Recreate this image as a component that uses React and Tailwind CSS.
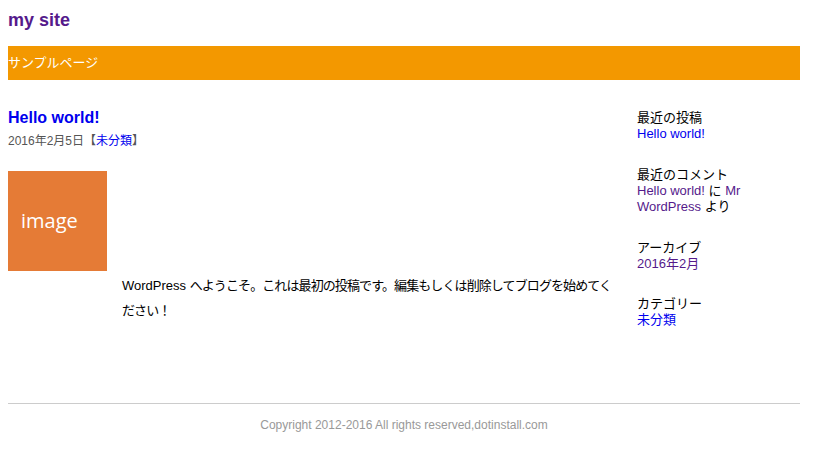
import React from "react";

const SideBlock = ({ title, children }) => (
  <div className="mb-6">
    <h3 className="text-[13px] leading-4 text-black">{title}</h3>
    <div className="text-[13px] leading-[16.5px]">{children}</div>
  </div>
);

const App = () => {
  return (
    <div className="min-h-[450px] bg-white p-2 font-['Liberation_Sans','Noto_Sans_CJK_JP',sans-serif]">
      <div className="w-[792px]">
        {/* Header */}
        <h1 className="text-[18px] font-bold leading-6 text-[#551a8b]">my site</h1>
        <nav className="mt-[14px] flex h-[34px] items-center bg-[#f39800] text-[13px] text-white">
          <a href="#">サンプルページ</a>
        </nav>

        <div className="mt-7 flex">
          {/* Main */}
          <main className="w-[612px]">
            <h2 className="text-[16px] font-bold leading-5 text-[#0000ee]">Hello world!</h2>
            <p className="mt-[5px] text-[12px] leading-4 text-[#555]">
              2016年2月5日【<a href="#" className="text-[#0000ee]">未分類</a>】
            </p>
            <div className="mt-[22px] flex h-[100px] w-[99px] items-center bg-[#e57b36] pl-[13px] font-['Open_Sans',sans-serif] text-[20px] text-white">
              image
            </div>
            <p className="ml-[114px] mt-[2px] text-[13px] leading-[25px] tracking-[-0.9px] text-black">
              <span className="tracking-normal">WordPress </span>へようこそ。これは最初の投稿です。編集もしくは削除してブログを始めてください！
            </p>
          </main>

          {/* Sidebar */}
          <aside className="ml-[17px] mt-[2px] w-[163px]">
            <SideBlock title="最近の投稿">
              <a href="#" className="text-[#0000ee]">Hello world!</a>
            </SideBlock>
            <SideBlock title="最近のコメント">
              <a href="#" className="text-[#551a8b]">Hello world!</a> に{" "}
              <a href="#" className="text-[#551a8b]">Mr WordPress</a> より
            </SideBlock>
            <SideBlock title="アーカイブ">
              <a href="#" className="text-[#551a8b]">2016年2月</a>
            </SideBlock>
            <SideBlock title="カテゴリー">
              <a href="#" className="text-[#0000ee]">未分類</a>
            </SideBlock>
          </aside>
        </div>

        {/* Footer */}
        <footer className="mt-[50px]">
          <hr className="border-t border-[#ccc]" />
          <p className="mt-[13px] text-center text-[12px] leading-4 text-[#999]">
            Copyright 2012-2016 All rights reserved,dotinstall.com
          </p>
        </footer>
      </div>
    </div>
  );
};

export default App;
